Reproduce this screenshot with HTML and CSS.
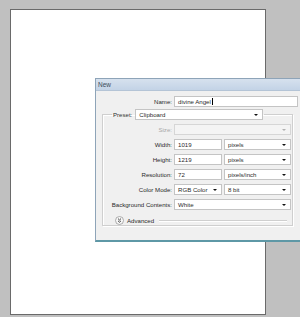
FILE: index.html
```html
<!DOCTYPE html>
<html lang="en">
<head>
  <meta charset="UTF-8">
  <title>New Document</title>
  <link rel="stylesheet" href="styles.css">
</head>
<body>

  <div class="canvas"></div>

  <div class="dialog">
    <div class="titlebar">New</div>
    <div class="content">
      <div class="name-row">
        <label>Name:</label>
        <div class="field name-field">divine Angel<span class="caret"></span></div>
      </div>

      <fieldset class="group">
        <legend class="preset">
          <span>Preset:</span>
          <div class="field drop preset-drop">Clipboard<i class="arrow"></i></div>
        </legend>

        <div class="grid">
          <label class="off">Size:</label>
          <div class="field drop wide off"><i class="arrow"></i></div>

          <label>Width:</label>
          <div class="field">1019</div>
          <div class="field drop">pixels<i class="arrow"></i></div>

          <label>Height:</label>
          <div class="field">1219</div>
          <div class="field drop">pixels<i class="arrow"></i></div>

          <label>Resolution:</label>
          <div class="field">72</div>
          <div class="field drop">pixels/inch<i class="arrow"></i></div>

          <label>Color Mode:</label>
          <div class="field drop">RGB Color<i class="arrow"></i></div>
          <div class="field drop">8 bit<i class="arrow"></i></div>

          <label>Background Contents:</label>
          <div class="field drop wide">White<i class="arrow"></i></div>
        </div>

        <div class="advanced">
          <span class="toggle">
            <svg width="9" height="9" viewBox="0 0 9 9">
              <circle cx="4.5" cy="4.5" r="4" fill="#f7f7f7" stroke="#9a9a9a" stroke-width="0.8"/>
              <path d="M3 2.6 L4.5 4 L6 2.6 M3 4.8 L4.5 6.2 L6 4.8" fill="none" stroke="#333" stroke-width="0.9"/>
            </svg>
          </span>
          <span>Advanced</span>
          <span class="rule"></span>
        </div>
      </fieldset>
    </div>
  </div>

</body>
</html>
```

FILE: styles.css
```css
body {
  margin: 0;
  width: 300px;
  height: 317px;
  overflow: hidden;
  position: relative;
  background-color: #c0c0c0;
  font-family: 'Liberation Sans', Arial, sans-serif;
  font-size: 6.1px;
  color: #2b2b2b;
}

.canvas {
  position: absolute;
  left: 10px;
  top: 9px;
  width: 254px;
  height: 304px;
  background: #fff;
  border: 1px solid #6a6a6a;
}

.dialog {
  position: absolute;
  left: 95px;
  top: 78px;
  width: 204px;
  height: 161px;
  overflow: hidden;
  background: #f0f0f0;
  border-left: 1px solid #8ea4b8;
  border-top: 1px solid #8ea4b8;
  border-bottom: 2px solid #5e98a6;
}

.titlebar {
  height: 11px;
  line-height: 11px;
  padding-left: 2px;
  font-size: 6.5px;
  color: #3a4a5c;
  background: linear-gradient(#d6e1ee, #c3d3e6);
  border-bottom: 1px solid #b4c4d6;
}

.content {
  padding-top: 5px;
}

.name-row {
  display: flex;
  gap: 2px;
}

.name-row label {
  width: 76px;
}

label {
  display: block;
  line-height: 11px;
  text-align: right;
  white-space: nowrap;
}

.field {
  position: relative;
  height: 9px;
  line-height: 9px;
  padding-left: 3px;
  background: #fff;
  border: 1px solid #c4c4c4;
  white-space: nowrap;
}

.name-field {
  width: 119px;
}

.caret {
  display: inline-block;
  width: 1px;
  height: 7px;
  margin-left: 1px;
  vertical-align: -1px;
  background: #000;
}

.arrow {
  position: absolute;
  right: 4px;
  top: 4px;
  border-left: 2px solid transparent;
  border-right: 2px solid transparent;
  border-top: 2px solid #111;
}

.off {
  color: #a8a8a8;
}

.field.off {
  background: #f4f4f4;
  border-color: #d6d6d6;
}

.field.off .arrow {
  border-top-color: #b0b0b0;
}

.group {
  margin: 2px 0 0 6px;
  padding: 0;
  width: 189px;
  height: 115px;
  border: 1px solid #cfcfcf;
  box-shadow: inset 1px 1px 0 #fff, 1px 1px 0 #fff;
}

.preset {
  display: flex;
  align-items: center;
  gap: 3px;
  margin-left: 9px;
  padding: 0 1px;
}

.preset-drop {
  width: 123px;
}

.grid {
  display: grid;
  grid-template-columns: 69px 48px 67px;
  grid-auto-rows: 11px;
  column-gap: 2px;
  row-gap: 4px;
  margin-top: 4px;
}

.grid .field {
  box-sizing: border-box;
  height: 11px;
}

.wide {
  grid-column: span 2;
}

.advanced {
  display: flex;
  align-items: center;
  gap: 3px;
  margin: 6px 0 0 12px;
}

.toggle {
  display: flex;
}

.rule {
  flex: 1;
  height: 0;
  margin: 1px 5px 0 2px;
  border-top: 1px solid #cfcfcf;
  border-bottom: 1px solid #fff;
}
```
